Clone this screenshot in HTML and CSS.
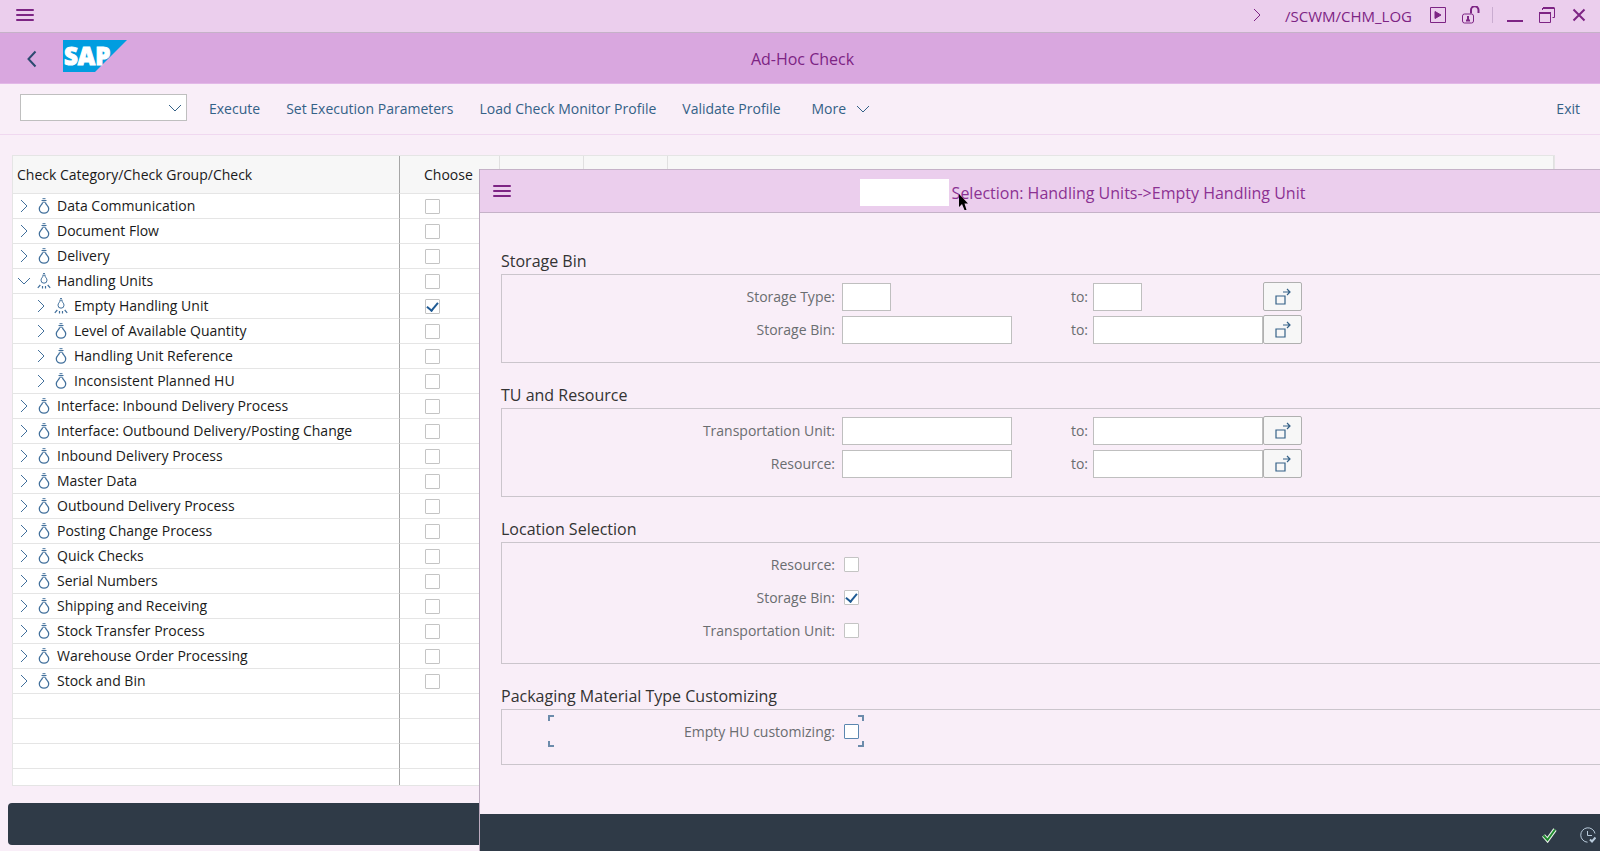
FILE: index.html
```html
<!DOCTYPE html>
<html lang="en">
<head>
    <meta charset="UTF-8">
    <meta name="viewport" content="width=device-width, initial-scale=1.0">
    <title>Ad-Hoc Check</title>
    <link rel="stylesheet" href="styles.css">
</head>
<body>
    <svg class="sprite" aria-hidden="true">
        <symbol id="right" viewBox="0 0 14 16"><path d="M4 2l6 6-6 6"/></symbol>
        <symbol id="down" viewBox="0 0 14 16"><path d="M1 5l6 6 6-6"/></symbol>
        <symbol id="menu" viewBox="0 0 18 14"><path d="M1 2h16M1 7h16M1 12h16" stroke-width="2" stroke-linecap="round"/></symbol>
        <symbol id="bulb" viewBox="0 0 14 16">
            <path d="M5.500 .7h3M4.500 2.500h5M5.500 4.200h3"/>
            <path d="M5.500 4.500C5.500 7 2.300 7.500 2.300 10.800a4.700 4.400 0 0 0 9.400 0C11.700 7.500 8.500 7 8.500 4.500" stroke-width="1.300"/>
        </symbol>
        <symbol id="bulb-on" viewBox="0 0 14 16">
            <path d="M6 .6h2M5.500 2.200h3"/>
            <path d="M6 2.500C6 4.500 4 5 4 7.200a3 3 0 0 0 6 0C10 5 8 4.500 8 2.500"/>
            <path d="M3.300 12L.8 14.800M10.700 12l2.500 2.800M5.500 13v2.500M8.500 13v2.500" stroke-width="1.200"/>
        </symbol>
        <symbol id="multi" viewBox="0 0 18 18"><path d="M2 8h9v8H2zM9 4h7M13 1l3 3-3 3" stroke-width="1.200"/></symbol>
    </svg>

    <div class="page">
        <header class="system-bar">
            <button class="icon-button" aria-label="Menu"><svg class="menu-icon"><use href="#menu"/></svg></button>
            <div class="system-tools">
                <svg class="chevron"><use href="#right"/></svg>
                <span class="transaction">/SCWM/CHM_LOG</span>
                <button class="icon-button play" aria-label="Run">
                    <svg width="18" height="18" viewBox="0 0 18 18"><path d="M1.500 1.500h15v15h-15z"/><path d="M6 5.500v7l6-3.500z" fill="currentColor"/></svg>
                </button>
                <button class="icon-button lock" aria-label="Unlock">
                    <svg width="20" height="18" viewBox="0 0 20 18"><rect x="1.500" y="8" width="11" height="9" rx="2"/><path d="M10 7.500V4a3.500 3.500 0 0 1 7.500 0v3" stroke-width="2"/><path d="M7 10.500v4M5 14.500h4M6 11h2" stroke-width="2"/></svg>
                </button>
                <span class="divider"></span>
                <button class="icon-button minimize" aria-label="Minimize">
                    <svg width="18" height="18" viewBox="0 0 18 18"><path d="M1 15h16" stroke-width="2"/></svg>
                </button>
                <button class="icon-button restore" aria-label="Restore">
                    <svg width="18" height="18" viewBox="0 0 18 18"><path d="M1.500 6.500h11v10h-11z"/><path d="M1 7h12M5 2h11" stroke-width="2"/><path d="M4.500 2v2M16.500 1.500v10h-2"/></svg>
                </button>
                <button class="icon-button" aria-label="Close">
                    <svg width="14" height="14" viewBox="0 0 14 14"><path d="M1.500 1.500l11 11M12.500 1.500l-11 11" stroke-width="2"/></svg>
                </button>
            </div>
        </header>

        <div class="title-bar">
            <button class="icon-button back" aria-label="Back">
                <svg width="10" height="18" viewBox="0 0 10 18"><path d="M8.500 1.500L1.500 9l7 7.500" stroke-width="2"/></svg>
            </button>
            <svg class="logo" viewBox="0 0 64 32" role="img" aria-label="SAP">
                <path class="logo-shape" d="M0 0h64L32 32H0z"/>
                <text x="1" y="25">SAP</text>
            </svg>
            <h1>Ad-Hoc Check</h1>
        </div>

        <nav class="toolbar">
            <div class="command">
                <select aria-label="Command"><option></option></select>
                <svg class="chevron"><use href="#down"/></svg>
            </div>
            <button>Execute</button>
            <button>Set Execution Parameters</button>
            <button>Load Check Monitor Profile</button>
            <button>Validate Profile</button>
            <button class="more">More <svg class="chevron"><use href="#down"/></svg></button>
            <button class="exit">Exit</button>
        </nav>

        <main class="table-wrap">
            <table>
                <colgroup>
                    <col class="col-name"><col class="col-choose"><col class="col-small"><col class="col-small"><col>
                </colgroup>
                <thead>
                    <tr><th>Check Category/Check Group/Check</th><th>Choose</th><th></th><th></th><th></th></tr>
                </thead>
                <tbody id="checks"></tbody>
            </table>
        </main>

        <footer class="page-footer"></footer>
    </div>

    <section class="dialog" role="dialog" aria-labelledby="dialog-title">
        <header class="dialog-header">
            <button class="icon-button" aria-label="Dialog menu"><svg class="menu-icon"><use href="#menu"/></svg></button>
            <div class="dialog-title">
                <span class="blank"></span>
                <div class="heading">
                    <h2 id="dialog-title">Selection: Handling Units-&gt;Empty Handling Unit</h2>
                    <svg class="cursor" viewBox="0 0 11 18"><path d="M1 1v13l3-3 2.500 6h2L6.500 10.500H10z"/></svg>
                </div>
            </div>
        </header>

        <form class="dialog-body">
            <fieldset>
                <legend>Storage Bin</legend>
                <div class="row">
                    <label for="type-from">Storage Type:</label>
                    <input type="text" class="short" id="type-from">
                    <label for="type-to" class="to">to:</label>
                    <input type="text" class="short" id="type-to">
                    <button type="button" class="multi" aria-label="Multiple selection"><svg><use href="#multi"/></svg></button>
                </div>
                <div class="row">
                    <label for="bin-from">Storage Bin:</label>
                    <input type="text" id="bin-from">
                    <label for="bin-to" class="to">to:</label>
                    <input type="text" id="bin-to">
                    <button type="button" class="multi" aria-label="Multiple selection"><svg><use href="#multi"/></svg></button>
                </div>
            </fieldset>

            <fieldset>
                <legend>TU and Resource</legend>
                <div class="row">
                    <label for="tu-from">Transportation Unit:</label>
                    <input type="text" id="tu-from">
                    <label for="tu-to" class="to">to:</label>
                    <input type="text" id="tu-to">
                    <button type="button" class="multi" aria-label="Multiple selection"><svg><use href="#multi"/></svg></button>
                </div>
                <div class="row">
                    <label for="res-from">Resource:</label>
                    <input type="text" id="res-from">
                    <label for="res-to" class="to">to:</label>
                    <input type="text" id="res-to">
                    <button type="button" class="multi" aria-label="Multiple selection"><svg><use href="#multi"/></svg></button>
                </div>
            </fieldset>

            <fieldset>
                <legend>Location Selection</legend>
                <div class="row">
                    <label for="loc-res">Resource:</label>
                    <input type="checkbox" id="loc-res">
                </div>
                <div class="row">
                    <label for="loc-bin">Storage Bin:</label>
                    <input type="checkbox" id="loc-bin" checked>
                </div>
                <div class="row">
                    <label for="loc-tu">Transportation Unit:</label>
                    <input type="checkbox" id="loc-tu">
                </div>
            </fieldset>

            <fieldset>
                <legend>Packaging Material Type Customizing</legend>
                <div class="row focused">
                    <label for="empty-hu">Empty HU customizing:</label>
                    <input type="checkbox" id="empty-hu">
                    <svg class="focus-frame" viewBox="0 0 316 32"><path d="M6 1H1v5M1 26v5h5M310 1h5v5M315 26v5h-5"/></svg>
                </div>
            </fieldset>
        </form>

        <footer class="dialog-footer">
            <button class="icon-button" aria-label="Continue">
                <svg width="16" height="16" viewBox="0 0 16 16"><path class="tick-outline" d="M2.500 8.500l4 4.500 7.500-10.500"/><path class="tick" d="M2.500 8.500l4 4.500 7.500-10.500"/></svg>
            </button>
            <button class="icon-button later" aria-label="Execute in background">
                <svg width="16" height="16" viewBox="0 0 16 16"><path d="M7.500 15.200A7.200 7.200 0 1 1 15 6.500M7.500 4v4.500H12"/><path d="M10 12.500l2 2 3.500-4" stroke-width="2"/></svg>
            </button>
        </footer>
    </section>

    <script>
        // level 0 = category, level 1 = check group
        const checks = [
            { name: 'Data Communication' },
            { name: 'Document Flow' },
            { name: 'Delivery' },
            { name: 'Handling Units', open: true, active: true },
            { name: 'Empty Handling Unit', level: 1, active: true, checked: true },
            { name: 'Level of Available Quantity', level: 1 },
            { name: 'Handling Unit Reference', level: 1 },
            { name: 'Inconsistent Planned HU', level: 1 },
            { name: 'Interface: Inbound Delivery Process' },
            { name: 'Interface: Outbound Delivery/Posting Change' },
            { name: 'Inbound Delivery Process' },
            { name: 'Master Data' },
            { name: 'Outbound Delivery Process' },
            { name: 'Posting Change Process' },
            { name: 'Quick Checks' },
            { name: 'Serial Numbers' },
            { name: 'Shipping and Receiving' },
            { name: 'Stock Transfer Process' },
            { name: 'Warehouse Order Processing' },
            { name: 'Stock and Bin' }
        ];
        const EMPTY_ROWS = 4;

        function nodeRow(check, i) {
            return `<tr>
                <td><div class="node${check.level ? ' child' : ''}">
                    <svg class="chevron"><use href="#${check.open ? 'down' : 'right'}"/></svg>
                    <svg class="bulb"><use href="#${check.active ? 'bulb-on' : 'bulb'}"/></svg>
                    <label for="check-${i}">${check.name}</label>
                </div></td>
                <td><input type="checkbox" id="check-${i}"${check.checked ? ' checked' : ''}></td>
                <td></td><td></td><td></td>
            </tr>`;
        }

        document.getElementById('checks').innerHTML =
            checks.map(nodeRow).join('') +
            '<tr><td></td><td></td><td></td><td></td><td></td></tr>'.repeat(EMPTY_ROWS);
    </script>
</body>
</html>
```
FILE: styles.css
```css
* {
    box-sizing: border-box;
}
body {
    margin: 0;
    height: 100vh;
    overflow: hidden;
    position: relative;
    background-color: #f9eef8;
    color: #1a1a1a;
    font-family: "Open Sans", "Noto Sans", sans-serif;
    font-size: 14px;
    line-height: 24px;
}
h1, h2 {
    margin: 0;
    font-weight: normal;
}
button, input, select {
    font: inherit;
    color: inherit;
}
svg {
    display: block;
    flex: none;
    fill: none;
    stroke: currentColor;
}
.sprite {
    position: absolute;
    width: 0;
    height: 0;
}
.chevron, .bulb {
    width: 14px;
    height: 16px;
}
.menu-icon {
    width: 18px;
    height: 14px;
}
.icon-button {
    display: flex;
    padding: 0;
    border: none;
    background: none;
    cursor: pointer;
}

.page {
    display: flex;
    flex-direction: column;
    height: 100%;
}

/* bars at the top */
.system-bar {
    display: flex;
    align-items: center;
    justify-content: space-between;
    height: 33px;
    padding: 0 14px 2px 16px;
    background-color: #ebceed;
    border-bottom: 1px solid #c5b2c8;
    color: #7d2484;
}
.system-tools {
    display: flex;
    align-items: center;
}
.transaction {
    margin: 2px 17px 0 21px;
    font-size: 15px;
}
.lock {
    margin-left: 14px;
}
.divider {
    width: 1px;
    height: 16px;
    margin: 0 13px 0 11px;
    background-color: #c9acd0;
}
.restore {
    margin: 0 16px 0 14px;
}
.title-bar {
    display: flex;
    align-items: center;
    height: 51px;
    padding: 2px 0 0 27px;
    background-color: #d9a7df;
    border-bottom: 1px solid #e3b8e8;
    color: #7d2484;
}
.title-bar h1 {
    flex: 1;
    margin-right: 122px;
    text-align: center;
    font-size: 16px;
}
.back {
    color: #2c4a70;
}
.logo {
    width: 64px;
    height: 32px;
    margin: 0 0 6px 26px;
    stroke: none;
}
.logo-shape {
    fill: #009de0;
}
.logo text {
    fill: #fff;
    stroke: #fff;
    font-size: 24px;
    font-weight: 800;
}
.toolbar {
    display: flex;
    align-items: center;
    gap: 26px;
    height: 51px;
    padding: 0 20px;
    border-bottom: 1px solid #f0d8f0;
    color: #346187;
}
.toolbar button {
    padding: 0;
    border: none;
    background: none;
    cursor: pointer;
}
.toolbar .more {
    display: flex;
    align-items: center;
    gap: 10px;
    margin-left: 5px;
}
.toolbar .exit {
    margin-left: auto;
}
.command {
    position: relative;
    margin: 0 -4px 4px 0;
}
.command select {
    display: block;
    width: 167px;
    height: 27px;
    border: 1px solid #bfbfbf;
    border-radius: 0;
    background-color: #fff;
    appearance: none;
}
.command .chevron {
    position: absolute;
    top: 6px;
    right: 5px;
    pointer-events: none;
}

/* check tree */
.table-wrap {
    flex: 1;
    min-height: 0;
    margin: 20px 45px 17px 12px;
    overflow: hidden;
    border: 1px solid #e5e5e5;
    background-color: #fff;
}
table {
    width: 100%;
    table-layout: fixed;
    border-collapse: separate;
    border-spacing: 0;
}
.col-name {
    width: 387px;
}
.col-choose {
    width: 100px;
}
.col-small {
    width: 84px;
}
th, td {
    padding: 0 0 0 4px;
    border-right: 1px solid #e0e0e0;
    border-bottom: 1px solid #e5e5e5;
    text-align: left;
}
th {
    height: 38px;
    background-color: #f7f7f7;
    font-weight: normal;
}
td {
    height: 25px;
}
th:first-child, td:first-child {
    border-right-color: #a6a6a6;
}
th:nth-child(2) {
    padding-left: 24px;
}
td:nth-child(2) {
    padding-left: 25px;
}
.node {
    display: flex;
    align-items: center;
    gap: 6px;
}
.node.child {
    padding-left: 17px;
}
.node svg {
    color: #42709c;
}
.page-footer {
    height: 42px;
    margin: 0 8px 6px;
    border-radius: 4px;
    background-color: #2f3a47;
}

/* tick boxes */
input[type="checkbox"] {
    display: grid;
    place-items: center;
    width: 15px;
    height: 15px;
    margin: 0;
    border: 1px solid #c4c4c4;
    border-radius: 1px;
    background-color: #fff;
    appearance: none;
}
input[type="checkbox"]:checked::after {
    content: "";
    width: 5px;
    height: 9px;
    margin-bottom: 3px;
    border: solid #1f5a94;
    border-width: 0 2px 2px 0;
    transform: rotate(40deg);
}

/* selection window */
.dialog {
    position: absolute;
    top: 169px;
    right: 0;
    bottom: 0;
    left: 479px;
    display: flex;
    flex-direction: column;
    border-left: 1px solid #bcaabf;
    background-color: #f9eef8;
}
.dialog-header {
    display: flex;
    align-items: center;
    height: 44px;
    padding: 0 13px;
    border: solid #c5b2c8;
    border-width: 1px 0;
    background-color: #ebceed;
    color: #7d2484;
}
.dialog-title {
    flex: 1;
    display: flex;
    align-items: center;
    justify-content: center;
    gap: 3px;
    padding: 3px 0 0 67px;
}
.heading {
    position: relative;
}
.dialog-title h2 {
    color: #8b3293;
    font-size: 16px;
}
.blank {
    width: 89px;
    height: 27px;
    background-color: #fff;
}
.cursor {
    position: absolute;
    top: 12px;
    left: 6px;
    width: 11px;
    height: 18px;
    fill: #000;
    stroke: none;
}
.dialog-body {
    flex: 1;
    padding: 61px 0 0 21px;
    color: #6a6d70;
}
fieldset {
    position: relative;
    display: flex;
    flex-direction: column;
    gap: 4px;
    margin: 0 0 45px;
    padding: 7px 0 18px;
    border: 1px solid #cbc5cc;
    border-right: none;
}
legend {
    position: absolute;
    top: -26px;
    left: -1px;
    padding: 0;
    color: #333;
    font-size: 16px;
}
.row {
    display: grid;
    grid-template-columns: 340px 170px 81px 170px 39px;
    align-items: center;
    height: 29px;
}
.row label {
    padding-right: 7px;
    text-align: right;
}
.row .to {
    padding-right: 5px;
}
.row input[type="text"] {
    width: 100%;
    height: 28px;
    padding: 0 4px;
    border: 1px solid #bfbfbf;
    background-color: #fff;
}
.row .short[type="text"] {
    width: 49px;
}
.row input[type="checkbox"] {
    margin-left: 2px;
}
.multi {
    display: flex;
    align-items: center;
    justify-content: center;
    height: 29px;
    padding: 0;
    border: 1px solid #b0b0b0;
    border-radius: 2px;
    background-color: #f7f7f7;
    color: #346187;
    cursor: pointer;
}
.multi svg {
    width: 18px;
    height: 18px;
}
.focused {
    position: relative;
}
.focused input[type="checkbox"] {
    border-color: #5b87b0;
}
.focus-frame {
    position: absolute;
    top: -2px;
    left: 46px;
    width: 316px;
    height: 32px;
    color: #6c8bab;
    stroke-width: 2;
    pointer-events: none;
}
.dialog-footer {
    display: flex;
    align-items: center;
    justify-content: flex-end;
    gap: 23px;
    height: 37px;
    padding: 5px 4px 0 0;
    background-color: #2f3a47;
}
.tick-outline {
    stroke: #e8f2e8;
    stroke-width: 4;
}
.tick {
    stroke: #1e8a2c;
    stroke-width: 2;
}
.later {
    color: #b9cbdc;
}
```
